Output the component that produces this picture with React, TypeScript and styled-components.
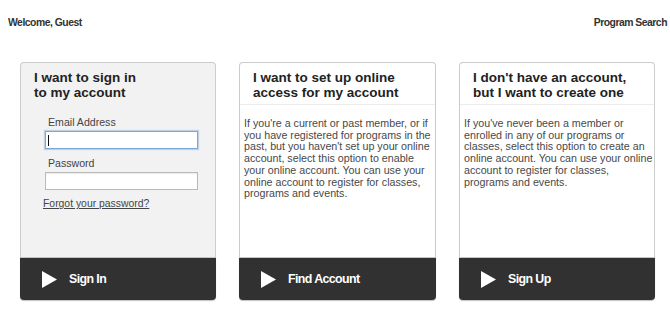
import React from "react";
import styled, { createGlobalStyle } from "styled-components";

const GlobalStyle = createGlobalStyle`
  html, body {
    margin: 0;
    padding: 0;
    background: #ffffff;
    font-family: "Liberation Sans", Arial, sans-serif;
  }
`;

const Page = styled.div`
  width: 670px;
  height: 320px;
  box-sizing: border-box;
`;

const TopBar = styled.div`
  display: flex;
  justify-content: space-between;
  align-items: center;
  padding: 17px 3px 0 8px;
  font-size: 10.4px;
  line-height: 12px;
  letter-spacing: -0.5px;
  font-weight: bold;
  color: #333333;
`;

const TopLink = styled.span`
  color: #333333;
  cursor: pointer;
`;

const Cards = styled.div`
  display: grid;
  grid-template-columns: 196px 197px 196px;
  column-gap: 23px;
  padding-left: 20px;
  margin-top: 33px;
`;

const Card = styled.div`
  height: 238px;
  display: flex;
  flex-direction: column;
`;

const CardTop = styled.div<{ $bg: string }>`
  flex: 1;
  background: ${(p) => p.$bg};
  border: 1px solid #cccccc;
  border-bottom: none;
  border-radius: 4px 4px 0 0;
  display: flex;
  flex-direction: column;
`;

const TitleWrap = styled.div<{ $line: string }>`
  padding: 7px 10px 4px 13px;
  border-bottom: 1px solid ${(p) => p.$line};
`;

const Title = styled.h2`
  margin: 0;
  font-size: 13.5px;
  line-height: 15px;
  font-weight: bold;
  color: #222222;
`;

const Body = styled.p`
  margin: 13px 0 0 0;
  padding: 0 2px 0 4px;
  font-size: 10.7px;
  line-height: 11.7px;
  color: #484848;
  white-space: nowrap;
`;

const Form = styled.div`
  margin-top: 11px;
  padding-left: 24px;
  display: flex;
  flex-direction: column;
`;

const Label = styled.label<{ $gap: number }>`
  display: block;
  padding-left: 3px;
  margin-top: ${(p) => p.$gap}px;
  margin-bottom: 3px;
  font-size: 10.6px;
  line-height: 12px;
  color: #444444;
`;

const InputBox = styled.div<{ $focused?: boolean }>`
  position: relative;
  width: 153px;
  height: 18px;
  box-sizing: border-box;
  background: #ffffff;
  border: 1px solid ${(p) => (p.$focused ? "#7ea6d8" : "#b9b9b9")};
  box-shadow: ${(p) =>
    p.$focused ? "0 0 1px 1px rgba(126,166,216,0.45)" : "inset 0 1px 1px rgba(0,0,0,0.08)"};
`;

const Field = styled.input`
  width: 100%;
  height: 100%;
  box-sizing: border-box;
  border: none;
  outline: none;
  background: transparent;
  padding: 0 3px;
  font-family: "Liberation Sans", Arial, sans-serif;
  font-size: 11px;
`;

const Caret = styled.span`
  position: absolute;
  left: 2px;
  top: 3px;
  width: 1px;
  height: 11px;
  background: #111111;
`;

const Forgot = styled.a`
  display: block;
  margin: 8px 0 0 22px;
  font-size: 10.4px;
  line-height: 12px;
  color: #444444;
  text-decoration: underline;
  cursor: pointer;
`;

const Footer = styled.div`
  height: 42px;
  flex: none;
  background: #313131;
  border-top: 1px solid #c4c4c4;
  border-radius: 0 0 4px 4px;
  box-shadow: 0 1px 1px rgba(0, 0, 0, 0.25);
  display: flex;
  align-items: center;
  padding-left: 22px;
  gap: 12px;
  cursor: pointer;
`;

const FooterText = styled.span`
  font-size: 12.4px;
  letter-spacing: -0.6px;
  font-weight: bold;
  color: #ffffff;
`;

const Play = () => (
  <svg width="15" height="17" viewBox="0 0 15 17">
    <polygon points="0,0 15,8.5 0,17" fill="#ffffff" />
  </svg>
);

const ActionFooter = ({ label }: { label: string }) => (
  <Footer>
    <Play />
    <FooterText>{label}</FooterText>
  </Footer>
);

const Lines = ({ lines }: { lines: string[] }) => (
  <>
    {lines.map((l, i) => (
      <React.Fragment key={i}>
        {l}
        {i < lines.length - 1 && <br />}
      </React.Fragment>
    ))}
  </>
);

export default function App() {
  return (
    <Page>
      <GlobalStyle />
      <TopBar>
        <span>Welcome, Guest</span>
        <TopLink>Program Search</TopLink>
      </TopBar>
      <Cards>
        <Card>
          <CardTop $bg="#f2f2f2">
            <TitleWrap $line="#f2f2f2">
              <Title>
                I want to sign in
                <br />
                to my account
              </Title>
            </TitleWrap>
            <Form>
              <Label $gap={0}>Email Address</Label>
              <InputBox $focused>
                <Field type="text" aria-label="Email Address" />
                <Caret />
              </InputBox>
              <Label $gap={8}>Password</Label>
              <InputBox>
                <Field type="password" aria-label="Password" />
              </InputBox>
            </Form>
            <Forgot>Forgot your password?</Forgot>
          </CardTop>
          <ActionFooter label="Sign In" />
        </Card>
        <Card>
          <CardTop $bg="#ffffff">
            <TitleWrap $line="#ececec">
              <Title>
                I want to set up online
                <br />
                access for my account
              </Title>
            </TitleWrap>
            <Body>
              <Lines
                lines={[
                  "If you're a current or past member, or if",
                  "you have registered for programs in the",
                  "past, but you haven't set up your online",
                  "account, select this option to enable",
                  "your online account. You can use your",
                  "online account to register for classes,",
                  "programs and events.",
                ]}
              />
            </Body>
          </CardTop>
          <ActionFooter label="Find Account" />
        </Card>
        <Card>
          <CardTop $bg="#ffffff">
            <TitleWrap $line="#ececec">
              <Title>
                I don't have an account,
                <br />
                but I want to create one
              </Title>
            </TitleWrap>
            <Body>
              <Lines
                lines={[
                  "If you've never been a member or",
                  "enrolled in any of our programs or",
                  "classes, select this option to create an",
                  "online account. You can use your online",
                  "account to register for classes,",
                  "programs and events.",
                ]}
              />
            </Body>
          </CardTop>
          <ActionFooter label="Sign Up" />
        </Card>
      </Cards>
    </Page>
  );
}
